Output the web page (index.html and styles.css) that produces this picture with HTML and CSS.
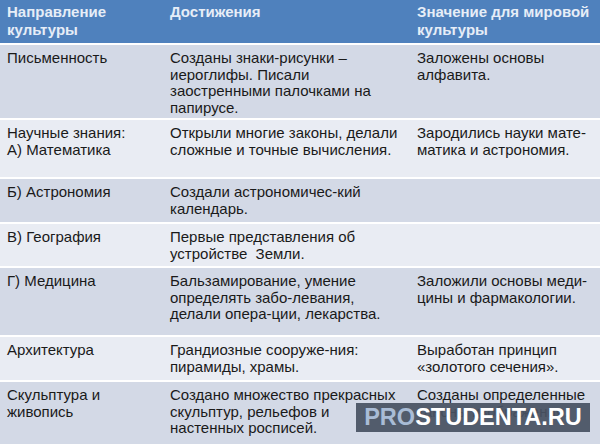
FILE: index.html
```html
<!DOCTYPE html>
<html lang="ru">
<head>
<meta charset="utf-8">
<link rel="stylesheet" href="styles.css">
</head>
<body>
<div class="table">
  <div class="row head">
    <div class="cell">Направление<br>культуры</div>
    <div class="cell">Достижения</div>
    <div class="cell">Значение для мировой<br>культуры</div>
  </div>
  <div class="row band h73">
    <div class="cell">Письменность</div>
    <div class="cell">Созданы знаки-рисунки –<br>иероглифы. Писали<br>заостренными палочками на<br>папирусе.</div>
    <div class="cell">Заложены основы<br>алфавита.</div>
  </div>
  <div class="row light h57">
    <div class="cell">Научные знания:<br>А) Математика</div>
    <div class="cell">Открыли многие законы, делали<br>сложные и точные вычисления.</div>
    <div class="cell">Зародились науки мате-<br>матика и астрономия.</div>
  </div>
  <div class="row band h43">
    <div class="cell">Б) Астрономия</div>
    <div class="cell">Создали астрономичес-кий<br>календарь.</div>
    <div class="cell"></div>
  </div>
  <div class="row light h42">
    <div class="cell">В) География</div>
    <div class="cell">Первые представления об<br>устройстве&nbsp; Земли.</div>
    <div class="cell"></div>
  </div>
  <div class="row band h67">
    <div class="cell">Г) Медицина</div>
    <div class="cell">Бальзамирование, умение<br>определять забо-левания,<br>делали опера-ции, лекарства.</div>
    <div class="cell">Заложили основы меди-<br>цины и фармакологии.</div>
  </div>
  <div class="row light h43">
    <div class="cell">Архитектура</div>
    <div class="cell">Грандиозные сооруже-ния:<br>пирамиды, храмы.</div>
    <div class="cell">Выработан принцип<br>«золотого сечения».</div>
  </div>
  <div class="row band h62">
    <div class="cell">Скульптура и<br>живопись</div>
    <div class="cell">Создано множество прекрасных<br>скульптур, рельефов и<br>настенных росписей.</div>
    <div class="cell">Созданы определенные<br>каноны изображения.</div>
  </div>
</div>
<div class="watermark"><span class="pro">PRO</span>STUDENTA.RU</div>
</body>
</html>
```
FILE: styles.css
```css
html, body {
  margin: 0;
  padding: 0;
  width: 600px;
  height: 444px;
  overflow: hidden;
  background: #ffffff;
}
body {
  position: relative;
  font-family: "Liberation Sans", Arial, sans-serif;
  font-size: 15px;
  color: #1a1a1a;
}
.table {
  display: flex;
  flex-direction: column;
  gap: 2px;
  background: #ffffff;
}
.row {
  display: grid;
  grid-template-columns: 163px 247px 190px;
}
.cell {
  padding: 5px 7px 0 7px;
  line-height: 16.7px;
  white-space: nowrap;
}
.head {
  height: 43px;
  background: #4f81bd;
  color: #e6edf7;
  font-weight: bold;
}
.head .cell {
  padding-top: 3px;
  line-height: 18px;
}
.band { background: #d3d9e6; }
.light { background: #e9ecf3; }
.h73 { height: 73px; }
.h57 { height: 57px; }
.h43 { height: 43px; }
.h42 { height: 42px; }
.h67 { height: 67px; }
.h62 { height: 62px; }
.watermark {
  position: absolute;
  left: 356px;
  top: 403px;
  width: 234px;
  height: 29px;
  background: rgba(72, 82, 98, 0.93);
  color: #ffffff;
  font-weight: bold;
  font-size: 23.5px;
  line-height: 29px;
  text-align: center;
}
.pro { color: #a9bcd6; }
```
